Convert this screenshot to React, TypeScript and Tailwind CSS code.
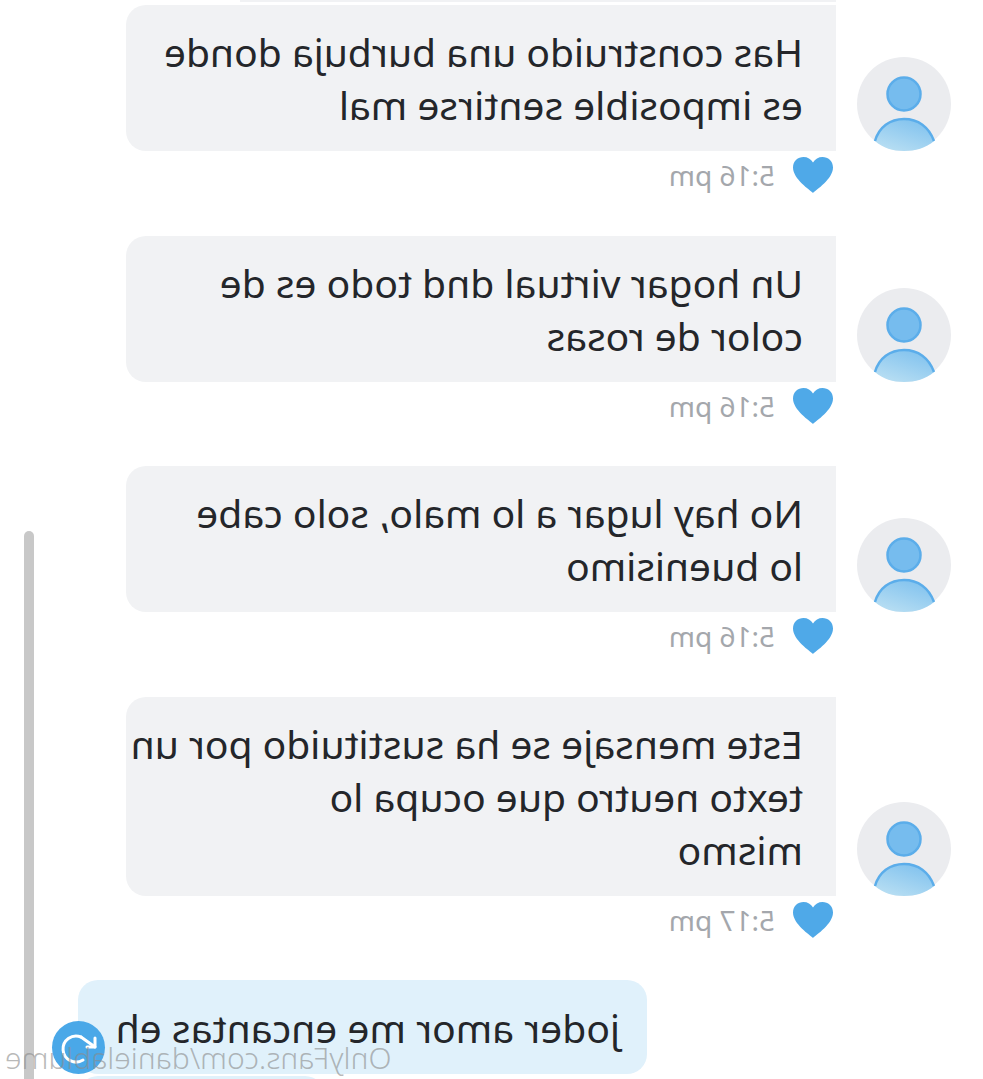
const Avatar = () => (
  <svg viewBox="0 0 94 94" className="w-[94px] h-[94px] shrink-0">
    <defs>
      <linearGradient id="body" x1="0.2" y1="0" x2="0.8" y2="1">
        <stop offset="0%" stopColor="#7fc1ee" />
        <stop offset="100%" stopColor="#b9dff3" />
      </linearGradient>
    </defs>
    <circle cx="47" cy="47" r="47" fill="#ebecef" />
    <circle cx="47" cy="37" r="16.5" fill="#76bcee" stroke="#5badea" strokeWidth="2.5" />
    <path
      d="M17 84 C22 70 33 62 47 62 C61 62 72 70 76 84 C68 91 58 94 47 94 C36 94 25 91 17 84 Z"
      fill="url(#body)"
    />
    <path d="M17 84 C22 70 33 62 47 62 C61 62 72 70 76 84" fill="none" stroke="#5badea" strokeWidth="2.5" />
  </svg>
);

const Heart = () => (
  <svg viewBox="0 0 40 36" className="w-[40px] h-[36px] shrink-0">
    <path
      d="M20 36 C17 33 0 22 0 10.5 C0 4 5 0 10.5 0 C14.5 0 18 2 20 5.5 C22 2 25.5 0 29.5 0 C35 0 40 4 40 10.5 C40 22 23 33 20 36 Z"
      fill="#4fa9e8"
    />
  </svg>
);

const Message = ({ lines, time }: { lines: string[]; time: string }) => (
  <div className="flex flex-col">
    <div className="flex items-end gap-[21px] pl-[32px]">
      <Avatar />
      <div className="w-[710px] bg-[#f1f2f4] rounded-r-[20px] pl-[33px] pr-4 py-[20px] text-[39px] leading-[53px] text-[#24262a]">
        {lines.map((line) => (
          <div key={line} className="whitespace-nowrap">{line}</div>
        ))}
      </div>
    </div>
    <div className="h-[84.5px] pl-[150px] pt-[6px] flex items-start gap-[18px]">
      <Heart />
      <span className="text-[28px] leading-[36px] text-[#a4a7ac]">{time}</span>
    </div>
  </div>
);

const messages = [
  { lines: ["Has construido una burbuja donde", "es imposible sentirse mal"], time: "5:16 pm" },
  { lines: ["Un hogar virtual dnd todo es de", "color de rosas"], time: "5:16 pm" },
  { lines: ["No hay lugar a lo malo, solo cabe", "lo buenisimo"], time: "5:16 pm" },
  { lines: ["Este mensaje se ha sustituido por un", "texto neutro que ocupa lo", "mismo"], time: "5:17 pm" },
];

export default function App() {
  return (
    <div className="relative w-[983px] h-[1079px] overflow-hidden bg-white -scale-x-100 font-['Noto_Sans',sans-serif]">
      <div className="flex flex-col">
        <div className="h-[2px] mb-[3px] ml-[147px] w-[596px] bg-[#f1f2f4]" />
        {messages.map((m, i) => (
          <Message key={i} lines={m.lines} time={m.time} />
        ))}
        <div className="ml-[336px] w-[569px] h-[94px] bg-[#e0f1fb] rounded-[20px] pl-[27px] flex items-center text-[39px] leading-[53px] text-[#24262a]">
          joder amor me encantas eh
        </div>
        <div className="mt-[2px] ml-[658px] w-[247px] h-[20px] bg-[#e0f1fb] rounded-t-[20px]" />
      </div>

      {/* scrollbar */}
      <div className="absolute right-[24px] top-[531px] bottom-0 w-[10px] rounded-t-full bg-[#c8c8c8]" />

      {/* scroll to bottom button */}
      <div className="absolute right-[52px] top-[1021px] w-[53px] h-[53px] rounded-full bg-[#4aa8e8] flex items-center justify-center">
        <svg viewBox="0 0 53 53" className="w-[53px] h-[53px]" fill="none" stroke="white" strokeWidth="3" strokeLinecap="round" strokeLinejoin="round">
          <path d="M10 17 V26 H18" />
          <path d="M10 26 L24 16" />
          <path d="M24 16 A13 13 0 1 1 22 39" />
        </svg>
      </div>

      {/* watermark */}
      <div className="absolute right-[5px] top-[1038px] text-[30px] leading-[40px] font-light text-[#8a8a8a]/60 whitespace-nowrap">
        OnlyFans.com/danielablume
      </div>
    </div>
  );
}
